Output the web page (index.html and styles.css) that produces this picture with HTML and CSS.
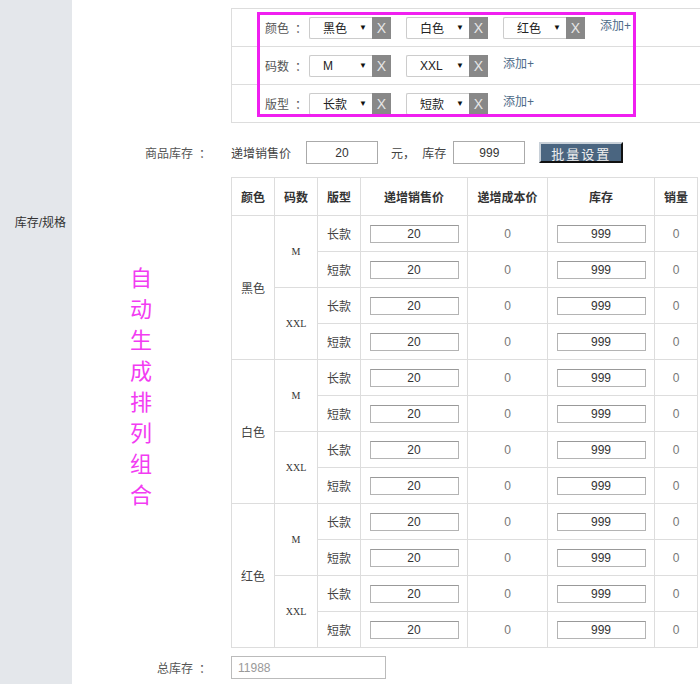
FILE: index.html
```html
<!DOCTYPE html>
<html lang="zh-CN">
<head>
<meta charset="utf-8">
<title>库存/规格</title>
<link rel="stylesheet" href="styles.css">
</head>
<body>
<div class="page">
  <aside class="side"><span class="side-lbl">库存/规格</span></aside>
  <main class="main">
    <div class="row">
      <div class="lbl"></div>
      <div class="spec">
        <div class="spec-row">
          <span class="spec-lbl">颜色<span class="colon">：</span></span>
          <div class="opt"><span class="sel"><span>黑色</span><span class="arr">▼</span></span><span class="x">X</span></div>
          <div class="opt"><span class="sel"><span>白色</span><span class="arr">▼</span></span><span class="x">X</span></div>
          <div class="opt"><span class="sel"><span>红色</span><span class="arr">▼</span></span><span class="x">X</span></div>
          <a class="add">添加+</a>
        </div>
        <div class="spec-row">
          <span class="spec-lbl">码数<span class="colon">：</span></span>
          <div class="opt"><span class="sel"><span>M</span><span class="arr">▼</span></span><span class="x">X</span></div>
          <div class="opt"><span class="sel"><span>XXL</span><span class="arr">▼</span></span><span class="x">X</span></div>
          <a class="add">添加+</a>
        </div>
        <div class="spec-row">
          <span class="spec-lbl">版型<span class="colon">：</span></span>
          <div class="opt"><span class="sel"><span>长款</span><span class="arr">▼</span></span><span class="x">X</span></div>
          <div class="opt"><span class="sel"><span>短款</span><span class="arr">▼</span></span><span class="x">X</span></div>
          <a class="add">添加+</a>
        </div>
        <div class="mark"></div>
      </div>
    </div>

    <div class="row stock">
      <div class="lbl">商品库存<span class="colon">：</span></div>
      <div class="ctl">
        <span>递增销售价</span>
        <input class="num price" value="20">
        <span class="unit">元， 库存</span>
        <input class="num qty" value="999">
        <button class="batch">批量设置</button>
      </div>
    </div>

    <div class="row grid-row">
      <div class="lbl annot-col"><div class="annot">自动生成排列组合</div></div>
      <table class="sku">
        <colgroup>
          <col class="c1"><col class="c2"><col class="c3"><col class="c4"><col class="c5"><col class="c6"><col class="c7">
        </colgroup>
        <thead>
          <tr><th>颜色</th><th>码数</th><th>版型</th><th>递增销售价</th><th>递增成本价</th><th>库存</th><th>销量</th></tr>
        </thead>
        <tbody>
          <tr><td rowspan="4">黑色</td><td rowspan="2" class="size">M</td><td>长款</td><td><input class="cell" value="20"></td><td class="z">0</td><td><input class="cell" value="999"></td><td class="z">0</td></tr>
          <tr><td>短款</td><td><input class="cell" value="20"></td><td class="z">0</td><td><input class="cell" value="999"></td><td class="z">0</td></tr>
          <tr><td rowspan="2" class="size">XXL</td><td>长款</td><td><input class="cell" value="20"></td><td class="z">0</td><td><input class="cell" value="999"></td><td class="z">0</td></tr>
          <tr><td>短款</td><td><input class="cell" value="20"></td><td class="z">0</td><td><input class="cell" value="999"></td><td class="z">0</td></tr>
          <tr><td rowspan="4">白色</td><td rowspan="2" class="size">M</td><td>长款</td><td><input class="cell" value="20"></td><td class="z">0</td><td><input class="cell" value="999"></td><td class="z">0</td></tr>
          <tr><td>短款</td><td><input class="cell" value="20"></td><td class="z">0</td><td><input class="cell" value="999"></td><td class="z">0</td></tr>
          <tr><td rowspan="2" class="size">XXL</td><td>长款</td><td><input class="cell" value="20"></td><td class="z">0</td><td><input class="cell" value="999"></td><td class="z">0</td></tr>
          <tr><td>短款</td><td><input class="cell" value="20"></td><td class="z">0</td><td><input class="cell" value="999"></td><td class="z">0</td></tr>
          <tr><td rowspan="4">红色</td><td rowspan="2" class="size">M</td><td>长款</td><td><input class="cell" value="20"></td><td class="z">0</td><td><input class="cell" value="999"></td><td class="z">0</td></tr>
          <tr><td>短款</td><td><input class="cell" value="20"></td><td class="z">0</td><td><input class="cell" value="999"></td><td class="z">0</td></tr>
          <tr><td rowspan="2" class="size">XXL</td><td>长款</td><td><input class="cell" value="20"></td><td class="z">0</td><td><input class="cell" value="999"></td><td class="z">0</td></tr>
          <tr><td>短款</td><td><input class="cell" value="20"></td><td class="z">0</td><td><input class="cell" value="999"></td><td class="z">0</td></tr>
        </tbody>
      </table>
    </div>

    <div class="row total">
      <div class="lbl">总库存<span class="colon">：</span></div>
      <input class="total-in" placeholder="11988">
    </div>
  </main>
</div>
</body>
</html>
```
FILE: styles.css
```css
html, body {
  margin: 0;
  padding: 0;
  background: #fff;
  overflow: hidden;
}
body {
  font-family: "Liberation Sans", "Noto Sans CJK SC", sans-serif;
  font-size: 12px;
  color: #444;
}
.page {
  display: flex;
  height: 684px;
}
.side {
  width: 72px;
  flex: none;
  background: #e4e7eb;
  text-align: right;
  box-sizing: border-box;
  padding: 215px 6px 0 0;
}
.side-lbl {
  display: block;
  line-height: 16px;
  color: #333;
}
.main {
  flex: 1;
  padding-top: 8px;
  display: flex;
  flex-direction: column;
}
.row {
  display: flex;
}
.lbl {
  width: 159px;
  flex: none;
  box-sizing: border-box;
  text-align: right;
  padding-right: 20px;
  color: #555;
}
.colon {
  margin-left: 6px;
}

/* spec box */
.spec {
  position: relative;
  width: 471px;
  flex: none;
  border: 1px solid #ddd;
}
.spec-row {
  height: 37px;
  display: flex;
  align-items: center;
  padding-left: 33px;
  border-top: 1px solid #ddd;
}
.spec-row:first-child {
  border-top: none;
}
.spec-lbl {
  width: 44px;
  color: #555;
}
.opt {
  display: flex;
  margin-right: 15px;
}
.sel {
  width: 63px;
  height: 22px;
  box-sizing: border-box;
  border: 1px solid #ccc;
  border-right: none;
  border-radius: 2px 0 0 2px;
  display: flex;
  align-items: center;
  justify-content: space-between;
  padding: 0 5px 0 13px;
  color: #222;
}
.arr {
  font-size: 8px;
  color: #111;
}
.x {
  width: 19px;
  height: 22px;
  background: #888;
  color: #e6e6e6;
  font-size: 14px;
  display: flex;
  align-items: center;
  justify-content: center;
}
.add {
  color: #4d6a88;
  margin-bottom: 6px;
  cursor: pointer;
}
.mark {
  position: absolute;
  left: 25px;
  top: 3px;
  width: 379px;
  height: 105px;
  box-sizing: border-box;
  border: 3px solid #f01ff0;
  pointer-events: none;
}

/* stock row */
.stock {
  margin-top: 18px;
  height: 23px;
  align-items: center;
}
.ctl {
  display: flex;
  align-items: center;
  color: #444;
}
.num {
  height: 23px;
  width: 72px;
  box-sizing: border-box;
  border: 1px solid #aaa;
  text-align: center;
  font: 12px "Liberation Sans", sans-serif;
  color: #333;
  padding: 0;
}
.price {
  margin-left: 15px;
}
.unit {
  margin-left: 13px;
  margin-right: 7px;
  word-spacing: 4px;
}
.batch {
  margin-left: 14px;
  width: 84px;
  height: 21px;
  background: #4a6580;
  color: #f0f0f0;
  font: 13px "Liberation Sans", "Noto Sans CJK SC", sans-serif;
  letter-spacing: 2px;
  border: 2px solid;
  border-color: #c8d0d8 #111 #111 #c8d0d8;
  padding: 0;
}

/* sku table */
.grid-row {
  margin-top: 13px;
}
.annot-col {
  padding: 0;
  text-align: left;
}
.annot {
  margin: 86px 0 0 58px;
  width: 22px;
  font-size: 22px;
  line-height: 31px;
  color: #f23cf2;
  word-break: break-all;
}
.sku {
  border-collapse: collapse;
  table-layout: fixed;
  width: 466px;
  flex: none;
}
.c1, .c2, .c3, .c7 { width: 43px; }
.c4, .c6 { width: 107px; }
.c5 { width: 80px; }
.sku th, .sku td {
  border: 1px solid #ddd;
  text-align: center;
  padding: 0;
}
.sku th {
  height: 37px;
  font-weight: bold;
  color: #333;
}
.sku td {
  height: 35px;
  color: #444;
}
.sku td.size {
  font-family: "Liberation Serif", serif;
  font-size: 10px;
  color: #333;
}
.sku td.z {
  color: #777;
}
.cell {
  width: 89px;
  height: 18px;
  box-sizing: border-box;
  border: 1px solid #b4b4b4;
  border-top-color: #999;
  text-align: center;
  font: 12px "Liberation Sans", sans-serif;
  color: #333;
  padding: 0;
  display: block;
  margin: 0 auto;
}

/* total */
.total {
  margin-top: 8px;
  height: 23px;
  align-items: center;
}
.total-in {
  width: 155px;
  height: 23px;
  box-sizing: border-box;
  border: 1px solid #bbb;
  padding: 0 6px;
  font: 12px "Liberation Sans", sans-serif;
}
.total-in::placeholder {
  color: #999;
}
```
